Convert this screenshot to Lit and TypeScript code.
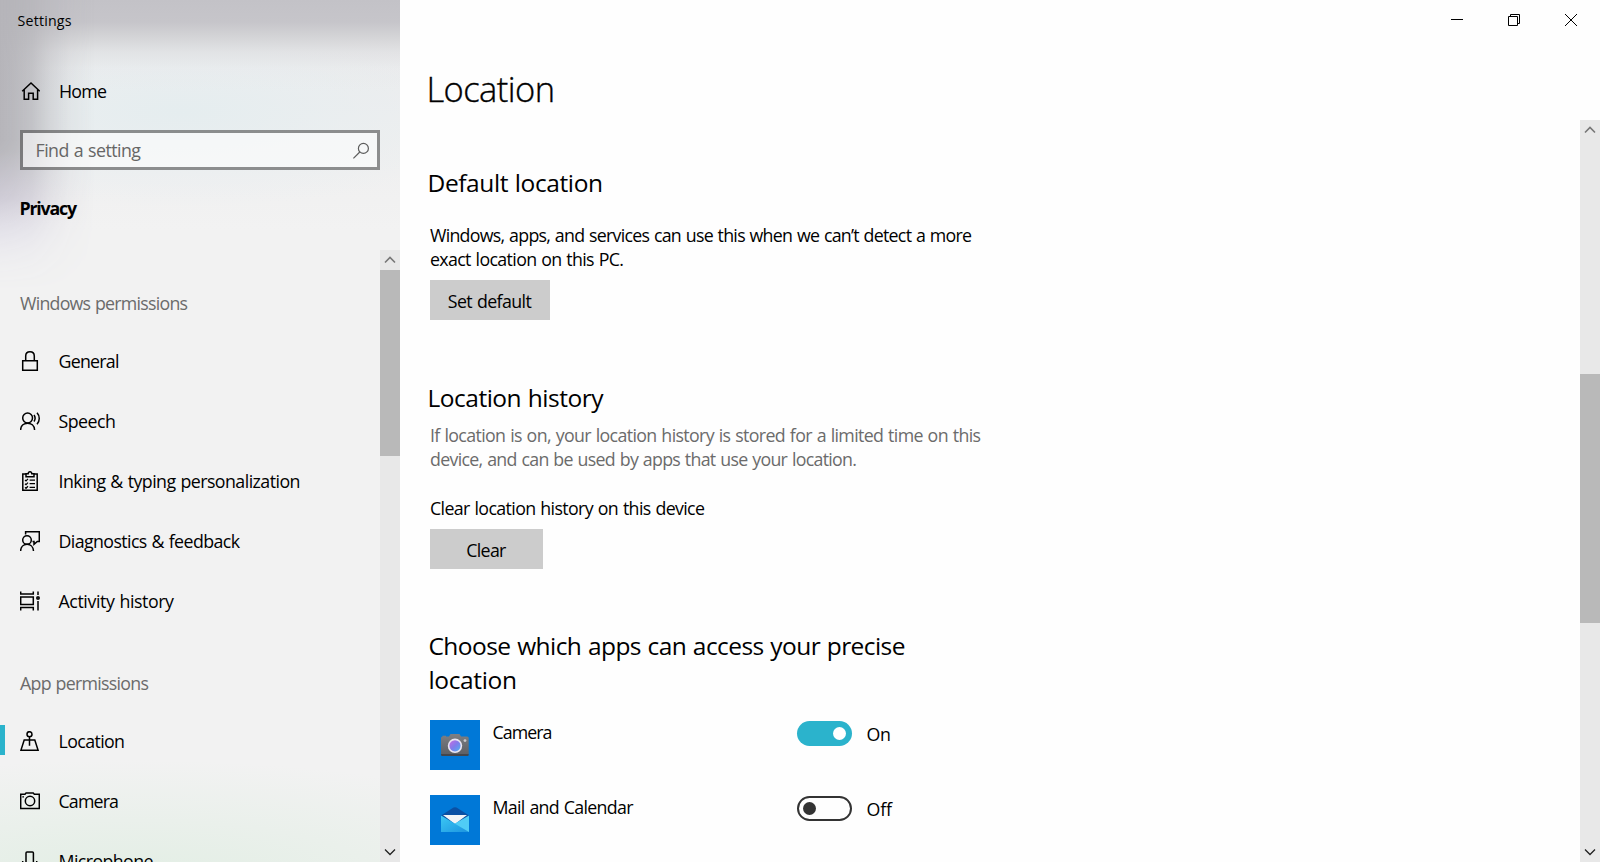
import { LitElement, html, css, svg } from "lit";
import { customElement, property } from "lit/decorators.js";

/** One line of text, tracked so that its advance equals the given width. */
@customElement("ui-text")
class UiText extends LitElement {
  @property({ type: Number }) w = 0;
  @property() text = "";
  static styles = css`
    :host { display: block; white-space: pre; }
    .line { display: inline-block; vertical-align: top; }
  `;
  updated() {
    const el = this.renderRoot.querySelector(".line") as HTMLElement;
    if (!this.w || this.text.length < 2) return;
    el.style.letterSpacing = "0px";
    const natural = el.getBoundingClientRect().width;
    el.style.letterSpacing = `${(this.w - natural) / (this.text.length - 1)}px`;
  }
  render() {
    return html`<span class="line">${this.text}</span>`;
  }
}

const t = (text: string, w: number, cls = "") =>
  html`<ui-text class=${cls} .text=${text} .w=${w}></ui-text>`;

const icons: Record<string, unknown> = {
  home: svg`<path d="M2.2 10.3 11 2l8.8 8.3M4.2 8.8V18.3H8.6V12.2H13.2V18.3H17.6V8.8"/>`,
  lock: svg`<path d="M2.7 9.7H17.3V19.3H2.7ZM5.7 9.7V5.2C5.7-.6 14.3-.6 14.3 5.2V9.7"/>`,
  speech: svg`<circle cx="7.6" cy="7" r="4.9"/><path d="M.6 19C.9 10 14.3 10 14.6 19M14 4C15.5 6.2 15.5 8.3 14 10.5M17 1.8C20 5 20 9.8 17 13.2"/>`,
  inking: svg`<path d="M6 3H2.8V19.3H17.2V3H14M6 5.7H14V2.8H11.8C11.6.1 8.4.1 8.2 2.8H6Z"/><path d="M5 9l1 .9 2-2M5 12.7l1 .9 2-2M5 16.4l1 .9 2-2M9.6 9H15M9.6 12.7H15M9.6 16.4H15" stroke-width="1.25"/>`,
  feedback: svg`<circle cx="7" cy="9" r="4.3"/><path d="M.6 20C.9 11 13.2 11 13.5 20M5.6 3.4V.8H19.3V10.5H17.3L14 13.4V10.5H12.5"/>`,
  activity: svg`<path d="M.7 .5V3H13.3V.5M.7 19.5V16.6H13.3V19.5M.7 6H13.3V13.6H.7ZM18 .5V4M18 10V19.5"/><circle cx="18" cy="7" r="2" fill="#111" stroke="none"/>`,
  location: svg`<circle cx="9.5" cy="3.2" r="2.5"/><path d="M9.5 5.7V14.8M4.2 9H14.8L18.1 19.3H.9Z"/>`,
  camera: svg`<path d="M.7 3.3H5L6.1 1.9H13.2L14.3 3.3H19.3V17.5H.7Z"/><circle cx="10" cy="10" r="4.7"/><path d="M2.3 5.8H4" stroke-width="1.2"/>`,
  mic: svg`<path d="M6 12V1.9Q6 1 7 1H12.4Q13.4 1 13.4 1.9V12M2.7 10V14M16.7 10V14"/>`,
};

const icon = (name: string, cls = "icon") =>
  html`<svg class=${cls} viewBox="0 0 20 20">${icons[name]}</svg>`;

const chevron = (up: boolean, cls = "") => html`
  <svg class="chev ${cls}" viewBox="0 0 20 20"><path d=${up ? "M5 12.5 10 7.5 15 12.5" : "M5 7.5 10 12.5 15 7.5"} /></svg>`;

@customElement("app-root")
class AppRoot extends LitElement {
  static styles = css`
    :host {
      display: flex; width: 1600px; height: 862px; overflow: hidden;
      background: #fefefe; color: #000;
      font: 17.8px/24px "Open Sans", "Noto Sans", sans-serif;
      word-spacing: .8px;
    }
    * { box-sizing: border-box; }
    .side {
      width: 400px; height: 862px; padding-top: 11px; display: flex; flex-direction: column;
      position: relative; isolation: isolate;
      background:
        linear-gradient(to bottom, #c3c2c7 0, rgba(196,195,200,.95) 22px, rgba(203,203,206,.75) 36px, rgba(215,215,218,.45) 52px, rgba(228,228,231,.2) 68px, rgba(235,235,237,0) 92px),
        radial-gradient(ellipse 330px 95px at 180px 112px, rgba(229,237,239,1), rgba(232,238,240,.75) 45%, rgba(240,241,242,0)),
        radial-gradient(ellipse 500px 120px at 130px 880px, #e2eee4, rgba(238,241,238,0)),
        linear-gradient(to bottom, #ececed 60px, #f2f2f2 230px);
    }
    /* Grey-to-lilac haze down the left edge, fading out below the section title. */
    .side::before {
      content: ""; position: absolute; z-index: -1; left: 0; top: 0; width: 100px; height: 290px;
      background: linear-gradient(to bottom, #b5b4b9 0, #b6b5ba 150px, #c3bfcc 195px, #d6d3e2 235px, #e6e4ee 270px);
      -webkit-mask-image: linear-gradient(to right, #000 0, rgba(0,0,0,.93) 14px, rgba(0,0,0,.76) 32px, rgba(0,0,0,.42) 50px, rgba(0,0,0,.15) 70px, transparent 95px), linear-gradient(to bottom, #000 0, #000 140px, rgba(0,0,0,.75) 200px, rgba(0,0,0,.3) 250px, transparent 290px);
      -webkit-mask-composite: source-in;
      mask-composite: intersect;
    }
    .title { font-size: 14.2px; line-height: 20px; margin-left: 17.5px; }
    .home { display: flex; align-items: center; height: 24px; margin: 48px 0 0 20px; gap: 19px; }
    .search {
      margin: 27px 20px 0; height: 40px; border: 3px solid rgba(70,70,70,.58);
      background: rgba(255,255,255,.55); background-clip: padding-box; display: flex; align-items: center;
      justify-content: space-between; padding: 0 7px 0 12.5px; color: #666; flex: none;
    }
    .mag { width: 18px; height: 18px; fill: none; stroke: #5c5c5c; stroke-width: 1.2; position: relative; top: 1px; }
    .privacy { font-weight: 700; margin: 26px 0 1px 19.5px; }
    .scroll { flex: 1; min-height: 0; margin-top: 29px; display: flex; }
    .list { flex: 1; overflow: hidden; padding-top: 41px; }
    .group { color: #6b6b6b; margin-left: 20px; padding-bottom: 16px; }
    .group.second { margin-top: 40px; }
    .item { height: 60px; display: flex; align-items: center; }
    .mark { width: 5px; height: 30px; margin-right: 15px; position: relative; top: -1px; }
    .mark.on { background: #2bb3cc; }
    .item .icon { margin-right: 18.5px; }
    .icon { width: 20px; height: 20px; fill: none; stroke: #000; stroke-width: 1.5; flex: none; }
    .bar { width: 20px; flex: none; background: #e8e8e8; display: flex; flex-direction: column; }
    .chev { width: 20px; height: 20px; fill: none; stroke: #222; stroke-width: 1.3; flex: none; }
    .chev.dim { stroke: #777; stroke-width: 1.6; }
    .space { flex: 1; }
    .thumb { background: #b9b9b9; }
    .thumb.a { height: 186px; }
    .thumb.b { height: 249px; margin-top: 234px; }
    .main { flex: 1; display: flex; flex-direction: column; min-width: 0; }
    .caption { height: 40px; display: flex; justify-content: flex-end; padding-right: .5px; }
    .cap { width: 57px; height: 40px; display: flex; align-items: center; justify-content: center; }
    .cap svg { width: 12px; height: 12px; fill: none; stroke: #000; stroke-width: 1; overflow: visible; }
    .h1 { font-size: 34.5px; line-height: 46px; font-weight: 300; margin: 26px 0 0 26.5px; -webkit-text-stroke: .35px #000; }
    .body { flex: 1; min-height: 0; margin-top: 8px; display: flex; justify-content: space-between; }
    .content { overflow: hidden; padding: 46px 0 0 30px; width: 700px; }
    .h2 { font-size: 24.5px; line-height: 34px; margin-left: -2.5px; }
    .h2.c { margin-left: -1.5px; }
    .para { margin-top: 23px; }
    .muted { color: #6b6b6b; margin-top: 8px; }
    .clear { margin-top: 25px; }
    .btn {
      margin: 9px 0 60px; height: 40px; width: 120px; background: #ccc;
      display: flex; align-items: center; justify-content: center; padding: 1px 1px 0 0;
    }
    .btn.first { margin-bottom: 61px; }
    .btn.narrow { width: 113px; }
    .apps { margin-top: 23px; display: grid; gap: 25px; }
    .app { display: grid; grid-template-columns: 50px 317px 55px auto; height: 50px; align-items: start; }
    .tile { width: 50px; height: 50px; display: block; }
    .name { padding-left: 12.5px; }
    .switch { margin: 1px 0 0; width: 55px; height: 25px; border-radius: 13px; display: flex; align-items: center; padding: 0 6px; }
    .switch.on { background: #2bb3cc; justify-content: flex-end; }
    .switch.off { border: 2px solid #333; padding: 0 4px; }
    .knob { width: 13px; height: 13px; border-radius: 50%; background: #fff; }
    .off .knob { background: #333; }
    .state { margin: 2px 0 0 14.5px; }
  `;

  item(name: string, label: string, w: number, on = false) {
    return html`<div class="item"><div class="mark ${on ? "on" : ""}"></div>${icon(name)}${t(label, w)}</div>`;
  }

  app(tile: unknown, name: string, w: number, on: boolean) {
    return html`<div class="app">
      <svg class="tile" viewBox="0 0 50 50"><rect width="50" height="50" fill="#0078d7"/>${tile}</svg>
      ${t(name, w, "name")}
      <div class="switch ${on ? "on" : "off"}"><div class="knob"></div></div>
      ${t(on ? "On" : "Off", on ? 24.5 : 25.5, "state")}
    </div>`;
  }

  render() {
    const camera = svg`
      <defs>
        <linearGradient id="body" x2="0" y2="1"><stop stop-color="#7d7f83"/><stop offset="1" stop-color="#5d6066"/></linearGradient>
        <linearGradient id="lens" x1="0" y1="0" x2="1" y2="1"><stop stop-color="#c86be0"/><stop offset=".5" stop-color="#7f7cec"/><stop offset="1" stop-color="#4fb4ee"/></linearGradient>
      </defs>
      <path d="M12.5 16.5V15.8H16V16.5H19L20.5 14H29.5L31 16.5H37Q38.7 16.5 38.7 18V34H11V18Q11 16.5 12.5 16.5Z" fill="url(#body)"/>
      <path d="M11 34H38.7V35Q38.7 36 37.5 36H12.2Q11 36 11 35Z" fill="#43464c"/>
      <circle cx="25" cy="25.8" r="7.2" fill="#e9e6f3"/><circle cx="25" cy="25.8" r="5.6" fill="url(#lens)"/>
      <circle cx="35" cy="20.6" r="1.4" fill="#c9cbd0"/>`;
    const mail = svg`
      <defs>
        <linearGradient id="env" x1="0" y1="0" x2="1" y2="1"><stop stop-color="#3cc8f4"/><stop offset="1" stop-color="#1c94e0"/></linearGradient>
      </defs>
      <path d="M11 20.5 23.5 12.6Q25 11.8 26.5 12.6L39 20.5V26H11Z" fill="#0a50a4"/>
      <path d="M13 20H37L25 29Z" fill="#f2f4f7"/>
      <path d="M39 20.5V37H24L25 28.6Z" fill="#50cdf6"/>
      <path d="M11 20.5 39 37H11Z" fill="url(#env)"/>`;
    return html`
      <div class="side">
        ${t("Settings", 54, "title")}
        <div class="home">${icon("home")}${t("Home", 48)}</div>
        <div class="search">${t("Find a setting", 105.5)}
          <svg class="mag" viewBox="0 0 18 18"><circle cx="11.4" cy="6.4" r="5"/><path d="M7.8 10 1.4 16.4"/></svg>
        </div>
        ${t("Privacy", 57.5, "privacy")}
        <div class="scroll">
          <div class="list">
            ${t("Windows permissions", 168, "group")}
            ${this.item("lock", "General", 61)}
            ${this.item("speech", "Speech", 57.5)}
            ${this.item("inking", "Inking & typing personalization", 242)}
            ${this.item("feedback", "Diagnostics & feedback", 181.5)}
            ${this.item("activity", "Activity history", 115.5)}
            ${t("App permissions", 129, "group second")}
            ${this.item("location", "Location", 66.5, true)}
            ${this.item("camera", "Camera", 60.5)}
            ${this.item("mic", "Microphone", 95)}
          </div>
          <div class="bar">${chevron(true, "dim")}<div class="thumb a"></div><div class="space"></div>${chevron(false)}</div>
        </div>
      </div>
      <div class="main">
        <div class="caption">
          <div class="cap"><svg viewBox="0 0 12 12"><path d="M0 5.5H12"/></svg></div>
          <div class="cap"><svg viewBox="0 0 12 12"><path d="M.5 2.5H9.5V11.5H.5ZM2.5 2.5V.5H11.5V9.5H9.5"/></svg></div>
          <div class="cap"><svg viewBox="0 0 12 12"><path d="M0 0 12 12M12 0 0 12"/></svg></div>
        </div>
        ${t("Location", 128.5, "h1")}
        <div class="body">
          <div class="content">
            ${t("Default location", 175.5, "h2")}
            <div class="para">
              ${t("Windows, apps, and services can use this when we can’t detect a more", 542)}
              ${t("exact location on this PC.", 194)}
            </div>
            <div class="btn first">${t("Set default", 84)}</div>
            ${t("Location history", 176, "h2")}
            <div class="muted">
              ${t("If location is on, your location history is stored for a limited time on this", 551)}
              ${t("device, and can be used by apps that use your location.", 427)}
            </div>
            ${t("Clear location history on this device", 275, "clear")}
            <div class="btn narrow">${t("Clear", 40)}</div>
            ${t("Choose which apps can access your precise", 477, "h2 c")}
            ${t("location", 88.5, "h2 c")}
            <div class="apps">
              ${this.app(camera, "Camera", 60, true)}
              ${this.app(mail, "Mail and Calendar", 141, false)}
            </div>
          </div>
          <div class="bar">${chevron(true, "dim")}<div class="thumb b"></div><div class="space"></div>${chevron(false)}</div>
        </div>
      </div>`;
  }
}
